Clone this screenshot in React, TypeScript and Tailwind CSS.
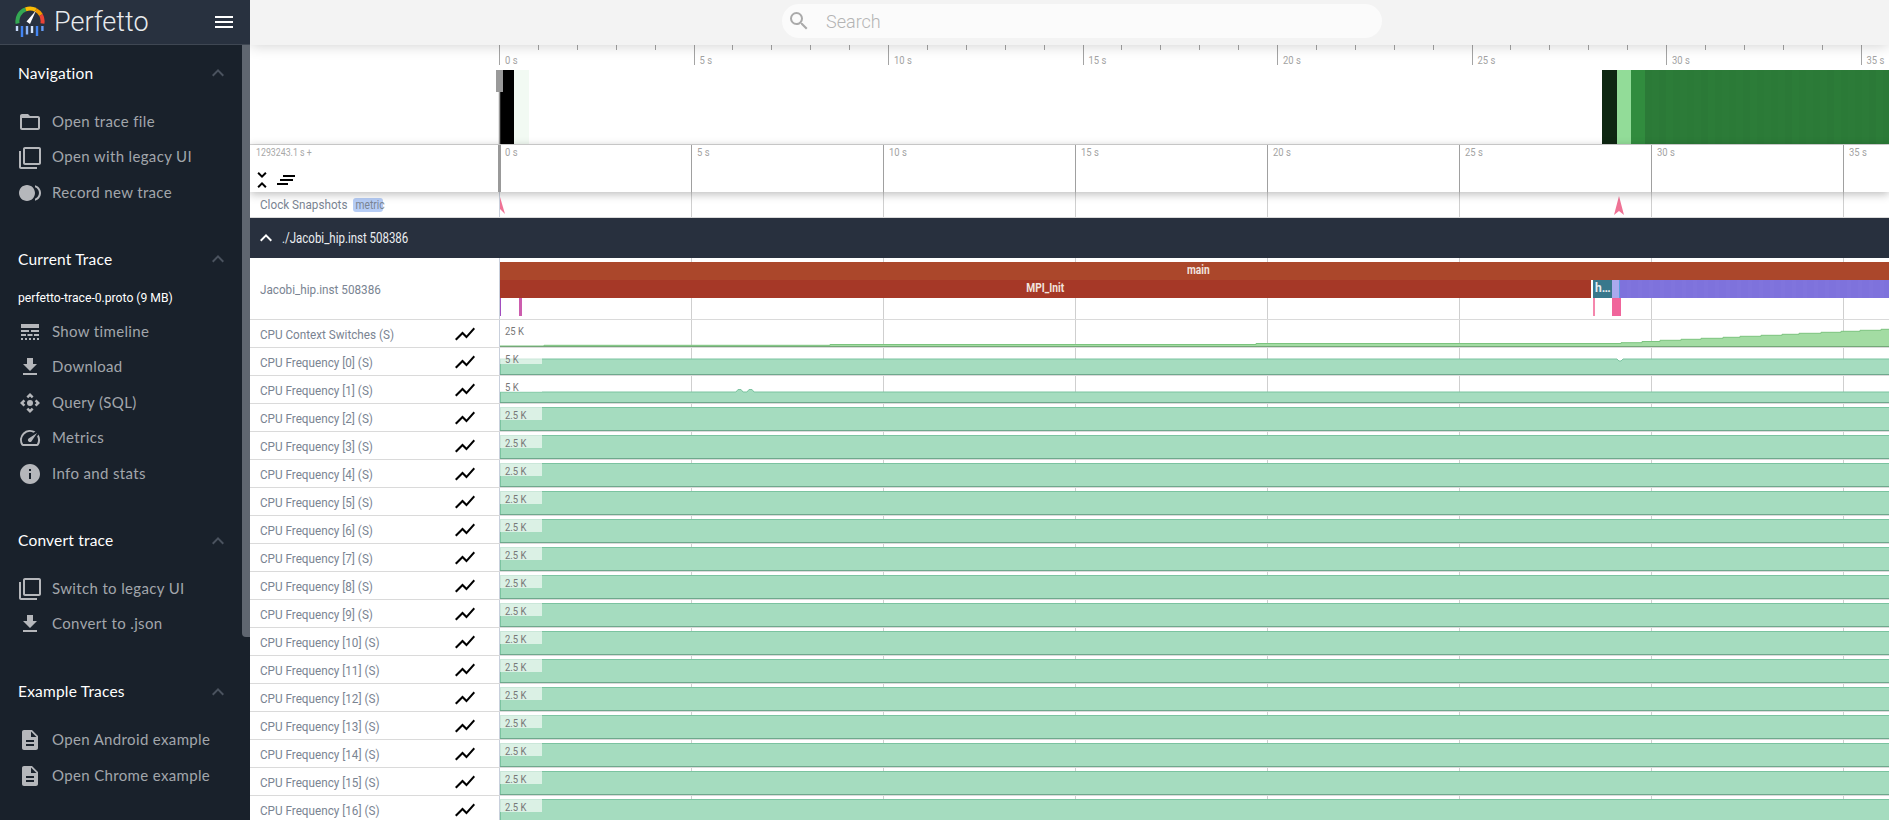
import type { ReactNode } from "react";

// material icon paths, same set the real sidebar uses
const ICONS: Record<string, string> = {
  folder:
    "M20 6h-8l-2-2H4c-1.1 0-1.99.9-1.99 2L2 18c0 1.1.9 2 2 2h16c1.1 0 2-.9 2-2V8c0-1.1-.9-2-2-2zm0 12H4V8h16v10z",
  copy: "M3 5H1v16c0 1.1.9 2 2 2h16v-2H3V5zm18-4H7c-1.1 0-2 .9-2 2v14c0 1.1.9 2 2 2h14c1.1 0 2-.9 2-2V3c0-1.1-.9-2-2-2zm0 16H7V3h14v14z",
  record:
    "M9 4c-4.42 0-8 3.58-8 8s3.58 8 8 8 8-3.58 8-8-3.58-8-8-8zm8 .26v2.09c2.33.82 4 3.04 4 5.65s-1.67 4.83-4 5.65v2.09c3.45-.89 6-4.01 6-7.74s-2.55-6.85-6-7.74z",
  timeline:
    "M3 16h5v-2H3v2zm6.5 0h5v-2h-5v2zm6.5 0h5v-2h-5v2zM3 20h2v-2H3v2zm4 0h2v-2H7v2zm4 0h2v-2h-2v2zm4 0h2v-2h-2v2zm4 0h2v-2h-2v2zM3 12h8v-2H3v2zm10 0h8v-2h-8v2zM3 4v4h18V4H3z",
  download: "M19 9h-4V3H9v6H5l7 7 7-7zM5 18v2h14v-2H5z",
  query:
    "M15.54 5.54L13.77 7.3 12 5.54 10.23 7.3 8.46 5.54 12 2zm2.92 10l-1.76-1.77L18.46 12l-1.76-1.77 1.76-1.77L22 12zm-10 2.92l1.77-1.76L12 18.46l1.77-1.76 1.77 1.76L12 22zm-2.92-10l1.76 1.77L5.54 12l1.76 1.77-1.76 1.77L2 12zM12 9a3 3 0 1 0 0 6 3 3 0 0 0 0-6z",
  speed:
    "M20.38 8.57l-1.23 1.85a8 8 0 0 1-.22 7.58H5.07A8 8 0 0 1 15.58 6.85l1.85-1.23A10 10 0 0 0 3.35 19a2 2 0 0 0 1.72 1h13.85a2 2 0 0 0 1.74-1 10 10 0 0 0-.27-10.44zm-9.79 6.84a2 2 0 0 0 2.83 0l5.66-8.49-8.49 5.66a2 2 0 0 0 0 2.83z",
  info: "M12 2C6.48 2 2 6.48 2 12s4.48 10 10 10 10-4.48 10-10S17.52 2 12 2zm1 15h-2v-6h2v6zm0-8h-2V7h2v2z",
  doc: "M14 2H6c-1.1 0-1.99.9-1.99 2L4 20c0 1.1.89 2 1.99 2H18c1.1 0 2-.9 2-2V8l-6-6zm2 16H8v-2h8v2zm0-4H8v-2h8v2zm-3-5V3.5L18.5 9H13z",
  chevron: "M12 8l-6 6 1.41 1.41L12 10.83l4.59 4.58L18 14z",
  chart: "M3.5 18.49l6-6.01 4 4L22 6.92l-1.41-1.41-7.09 7.97-4-4L2 16.99z",
  unfold:
    "M7.41 18.59L8.82 20 12 16.83 15.17 20l1.41-1.41L12 14l-4.59 4.59zm9.18-13.18L15.17 4 12 7.17 8.83 4 7.41 5.41 12 10l4.59-4.59z",
  search:
    "M15.5 14h-.79l-.28-.27A6.47 6.47 0 0 0 16 9.5 6.5 6.5 0 1 0 9.5 16c1.61 0 3.09-.59 4.23-1.57l.27.28v.79l5 4.99L20.49 19l-4.99-5zm-6 0C7.01 14 5 11.99 5 9.5S7.01 5 9.5 5 14 7.01 14 9.5 11.99 14 9.5 14z",
};

function Icon({ name, className }: { name: string; className: string }) {
  return (
    <svg viewBox="0 0 24 24" className={className} fill="currentColor">
      <path d={ICONS[name]} />
    </svg>
  );
}

function Logo() {
  return (
    <svg viewBox="0 0 30 32" className="w-[30px] h-8 shrink-0" fill="none">
      <g strokeWidth="4">
        <path d="M2.6 17.5A12.5 12.5 0 0 1 10.7 3.3" stroke="#34a853" />
        <path d="M10.7 3.3A12.5 12.5 0 0 1 20.8 3.9" stroke="#fbbc04" />
        <path d="M20.8 3.9A12.5 12.5 0 0 1 26 9" stroke="#f29900" />
        <path d="M26 9A12.5 12.5 0 0 1 27.4 17.5" stroke="#ea4335" />
      </g>
      <path d="M11.5 15.5L21 4.5 15 18z" fill="#fff" />
      <g strokeWidth="2.4">
        <path d="M2 20v5" stroke="#c6dafc" />
        <path d="M7 20v11" stroke="#4285f4" />
        <path d="M12 20v8.5" stroke="#8ab4f8" />
        <path d="M17 20v7" stroke="#d2e3fc" />
        <path d="M22 20v10" stroke="#4285f4" />
        <path d="M27.4 20v5" stroke="#669df6" />
      </g>
    </svg>
  );
}

interface SectionProps {
  title: string;
  subtitle?: string;
  items: [string, string][];
  className: string;
  listClass: string;
  headClass: string;
}

const SECTIONS: SectionProps[] = [
  {
    title: "Navigation",
    className: "mb-[20px]",
    listClass: "pt-[3.25px]",
    headClass: "mt-[2px]",
    items: [
      ["folder", "Open trace file"],
      ["copy", "Open with legacy UI"],
      ["record", "Record new trace"],
    ],
  },
  {
    title: "Current Trace",
    subtitle: "perfetto-trace-0.proto (9 MB)",
    className: "mb-[21.25px]",
    listClass: "pt-[7.25px]",
    headClass: "mt-[2px]",
    items: [
      ["timeline", "Show timeline"],
      ["download", "Download"],
      ["query", "Query (SQL)"],
      ["speed", "Metrics"],
      ["info", "Info and stats"],
    ],
  },
  {
    title: "Convert trace",
    className: "mb-[22.25px]",
    listClass: "pt-[2.25px]",
    headClass: "",
    items: [
      ["copy", "Switch to legacy UI"],
      ["download", "Convert to .json"],
    ],
  },
  {
    title: "Example Traces",
    className: "",
    listClass: "pt-[2.25px]",
    headClass: "mb-[2px]",
    items: [
      ["doc", "Open Android example"],
      ["doc", "Open Chrome example"],
    ],
  },
];

function Section({ title, subtitle, items, className, listClass, headClass }: SectionProps) {
  return (
    <section className={className}>
      <div className="h-14 flex items-center justify-between pl-[18px] pr-3">
        <h2 className={`text-[15.5px] text-white tracking-[0.2px] ${headClass}`}>{title}</h2>
        <Icon name="chevron" className="w-6 h-6 text-[#4b535f]" />
      </div>
      {subtitle && (
        <div className="h-5 pl-[18px] flex items-center font-[Roboto,sans-serif] text-[13.5px] text-white whitespace-nowrap">
          <span className="inline-block origin-left scale-x-[.9]">{subtitle}</span>
        </div>
      )}
      <ul className={listClass}>
        {items.map(([icon, label]) => (
          <li key={label} className="h-[35.5px] flex items-center pl-[18px] gap-[10px] text-[15px] tracking-[0.35px] text-[#a2a6ab]">
            <Icon name={icon} className="w-6 h-6 text-[#b5b7bb] shrink-0" />
            <span className="mb-[2px]">{label}</span>
          </li>
        ))}
      </ul>
    </section>
  );
}

function Sidebar() {
  return (
    <aside className="w-[250px] shrink-0 h-full bg-[#19212b] flex flex-col font-[Lato,sans-serif]">
      <header className="h-[45px] shrink-0 bg-[#28313f] border-b border-[#3f4753] flex items-center pl-[15px] pr-[17px]">
        <Logo />
        <span className="ml-[9px] text-[27px] font-light text-[#e8eaed] font-[Roboto,sans-serif]">Perfetto</span>
        <div className="ml-auto flex flex-col gap-[3px]">
          <div className="w-[18px] h-[2px] bg-white" />
          <div className="w-[18px] h-[2px] bg-white" />
          <div className="w-[18px] h-[2px] bg-white" />
        </div>
      </header>
      <div className="flex flex-1 min-h-0">
        <div className="w-[242px] shrink-0">
          {SECTIONS.map((s) => (
            <Section key={s.title} {...s} />
          ))}
        </div>
        <div className="w-2 h-[592px] bg-[#5f6670] rounded-bl-sm" />
      </div>
    </aside>
  );
}

function TopBar() {
  return (
    <div className="h-[45px] shrink-0 bg-[#f3f3f3] flex justify-center relative z-20 shadow-[0_0_14px_rgba(0,0,0,0.2)]">
      <div className="w-[600px] h-[34px] mt-1 ml-[25px] rounded-full bg-[#fbfbfb] flex items-center pl-[5px]">
        <Icon name="search" className="w-6 h-6 text-[#aaaaaa]" />
        <span className="ml-[15px] text-[18px] font-light text-[#b4b4b4]">Search</span>
      </div>
    </div>
  );
}

const SECONDS = [0, 5, 10, 15, 20, 25, 30, 35];

function SvgLabel({ x, y, children, fill = "#a3a3a3", size = 10.5 }: { x: number; y: number; children: ReactNode; fill?: string; size?: number }) {
  return (
    <text transform={`translate(${x} ${y}) scale(.9 1)`} fontSize={size} fill={fill}>
      {children}
    </text>
  );
}

function Overview() {
  const ticks = Array.from({ length: 38 }, (_, i) => i);
  const shades = ["#2b7a37", "#2c7b38", "#2b7937", "#2c7c38", "#2b7a37", "#2c7b38"];
  return (
    <div className="h-[100px] shrink-0 border-b border-[#d8d8d8] box-border">
      <svg className="block w-full h-[99px]" viewBox="0 0 1639 99" preserveAspectRatio="none">
        {ticks.map((i) => {
          const x = Math.round(249 + i * 38.9) + 0.5;
          return <line key={i} x1={x} x2={x} y1="0" y2={i % 5 === 0 ? 20 : 5} stroke="#a4a4a4" />;
        })}
        {SECONDS.map((s) => (
          <SvgLabel key={s} x={255 + s * 38.9} y={19}>{`${s} s`}</SvgLabel>
        ))}
        <rect x="250" y="25" width="14" height="74" fill="#000" />
        <rect x="264" y="25" width="15" height="74" fill="#f2faf3" />
        <rect x="1352" y="25" width="15" height="74" fill="#0e2712" />
        <rect x="1367" y="25" width="14" height="74" fill="#92dc98" />
        <rect x="1381" y="25" width="14" height="74" fill="#318c3e" />
        {Array.from({ length: 35 }, (_, i) => (
          <rect key={i} x={1395 + i * 7} y="25" width="7.5" height="74" fill={shades[i % shades.length]} />
        ))}
        <line x1="249.5" x2="249.5" y1="47" y2="99" stroke="#999" strokeWidth="1.5" />
        <rect x="246" y="25" width="7" height="22" fill="#9a9a9a" />
      </svg>
    </div>
  );
}

function TimeRuler() {
  return (
    <div className="h-[47px] shrink-0 flex relative z-10 bg-white shadow-[0_2px_9px_rgba(0,0,0,0.28)]">
      <div className="w-[248px] shrink-0 flex flex-col justify-between">
        <span className="pl-[6px] pt-[1px] text-[10px] text-[#a8a8a8] leading-[14px]">
          <span className="inline-block origin-left scale-x-[.88] whitespace-nowrap">1293243.1 s +</span>
        </span>
        <div className="flex items-center h-6">
          <Icon name="unfold" className="w-6 h-6 text-black" />
          <svg viewBox="0 0 18 10" className="w-[18px] h-[10px] ml-[3px] text-black" stroke="currentColor" strokeWidth="2">
            <path d="M6 1h12M3 5h13M0 9h11" />
          </svg>
        </div>
      </div>
      <svg className="flex-1 h-full border-l-[3px] border-[#999]" viewBox="0 0 1388 47" preserveAspectRatio="none">
        {SECONDS.slice(1).map((s) => (
          <line key={s} x1={s * 38.4 - 1.5} x2={s * 38.4 - 1.5} y1="0" y2="47" stroke="#a0a0a0" />
        ))}
        {SECONDS.map((s) => (
          <SvgLabel key={s} x={s * 38.4 + 4} y={11}>{`${s} s`}</SvgLabel>
        ))}
      </svg>
    </div>
  );
}

function TrackLabel({ label, graph = true }: { label: string; graph?: boolean }) {
  return (
    <div className="w-[249px] shrink-0 pl-[10px] pr-[22px] flex items-center justify-between text-[13px] text-[#7a8492] whitespace-nowrap">
      <span className="inline-block origin-left scale-x-[.9] mt-[2px]">{label}</span>
      {graph && <Icon name="chart" className="w-6 h-6 text-black" />}
    </div>
  );
}

// the 192px gridlines sit behind each track's drawing
const CHART_CLASS =
  "flex-1 min-w-0 border-l border-[#c9d0dc] bg-[linear-gradient(90deg,#cfcfcf_1px,transparent_1px)] bg-[length:192px_100%] bg-[position:191px_0] overflow-hidden";

function ContextSwitches() {
  const steps: [number, number][] = [
    [0, 26], [44, 25.3], [330, 24.5], [756, 23.5], [1121, 22.7], [1142, 21.5], [1160, 20.3], [1181, 19.3],
    [1201, 18.3], [1223, 17.3], [1240, 16.3], [1261, 15.3], [1282, 14.3], [1299, 13.3], [1321, 12.3],
    [1341, 11.3], [1360, 10.3], [1381, 9.3],
  ];
  let d = "";
  steps.forEach(([x, y], i) => {
    const next = i + 1 < steps.length ? steps[i + 1][0] : 1389;
    d += `${i ? "L" : "M"}${x} ${y}L${next} ${y}`;
  });
  return (
    <svg className="block w-full h-[27px]" viewBox="0 0 1389 27" preserveAspectRatio="none">
      <path d={`${d}L1389 27L0 27Z`} fill="#a3dca3" />
      <path d={d} fill="none" stroke="#7cc47f" />
      <line x1="0" x2="1389" y1="26.5" y2="26.5" stroke="#74a878" />
      <SvgLabel x={5} y={14.5} fill="#777">25 K</SvgLabel>
    </svg>
  );
}

function Frequency({ index }: { index: number }) {
  const top = index === 0 ? 11 : index === 1 ? 16 : 3.5;
  let line = `M0 ${top}L1389 ${top}`;
  if (index === 0) line = `M0 ${top}L1117 ${top}L1119 ${top + 2}L1121 ${top + 2}L1123 ${top}L1389 ${top}`;
  if (index === 1) line = `M0 ${top}L236 ${top}L238 ${top - 2.5}L241 ${top - 2.5}L243 ${top}L247 ${top}L249 ${top - 2.5}L252 ${top - 2.5}L254 ${top}L1389 ${top}`;
  return (
    <svg className="block w-full h-[27px]" viewBox="0 0 1389 27" preserveAspectRatio="none">
      <path d={`${line}L1389 27L0 27Z`} fill="#a5dcbf" />
      <path d={line} fill="none" stroke="#7bc3a0" />
      <line x1="0.5" x2="0.5" y1={top} y2="27" stroke="#7bc3a0" />
      <line x1="0" x2="1389" y1="26.5" y2="26.5" stroke="#6fa88d" />
      <rect x="0" y="3" width="42" height="13" fill="#fff" fillOpacity="0.6" />
      <SvgLabel x={5} y={14.5} fill="#777">{index < 2 ? "5 K" : "2.5 K"}</SvgLabel>
    </svg>
  );
}

function Track({ label, children }: { label: string; children: ReactNode }) {
  return (
    <div className="h-7 shrink-0 flex border-b border-[#dadada]">
      <TrackLabel label={label} />
      <div className={CHART_CLASS}>{children}</div>
    </div>
  );
}

function ProcessTrack() {
  return (
    <div className="h-[62px] shrink-0 flex border-b border-[#dadada]">
      <TrackLabel label="Jacobi_hip.inst 508386" graph={false} />
      <div className={`${CHART_CLASS} pt-1`}>
        <div className="w-[1396px] h-[18px] bg-[#ab472b] text-center text-[12px] font-bold leading-[17px] text-[#f1e3de]">
          <span className="inline-block scale-x-[.85]">main</span>
        </div>
        <div className="flex h-[18px] text-[12px] font-bold leading-[17px] text-[#f1e3de]">
          <div className="w-[1091px] shrink-0 bg-[#a63827] text-center">
            <span className="inline-block scale-x-[.85]">MPI_Init</span>
          </div>
          <div className="w-[2px] shrink-0 bg-white" />
          <div className="w-[19px] shrink-0 bg-[#38788c] pl-[2px] text-[#e6eef2]">h…</div>
          <div className="w-[7px] shrink-0 bg-[#a9a9ee]" />
          <div className="w-px shrink-0 bg-[#5b9be0]" />
          <div className="flex-1 bg-[repeating-linear-gradient(90deg,#7e72dc_0px,#7e72dc_7px,#8074dd_7px,#8074dd_11px)]" />
        </div>
        <div className="flex h-[18px]">
          <div className="w-px bg-[#a24dbf]" />
          <div className="w-[18px]" />
          <div className="w-[3px] bg-[#cc5dae]" />
          <div className="w-[1071px]" />
          <div className="w-[2px] bg-[#f587ad]" />
          <div className="w-[17px]" />
          <div className="w-[9px] bg-[#f0659b]" />
        </div>
      </div>
    </div>
  );
}

function ClockTrack() {
  return (
    <div className="h-[26px] shrink-0 flex border-b border-[#dadada]">
      <div className="w-[249px] shrink-0 pl-[10px] flex items-center text-[13px] text-[#7a8492] whitespace-nowrap">
        <span className="inline-block origin-left scale-x-[.9] w-[85px]">Clock Snapshots</span>
        <span className="ml-[8px] h-[14px] w-[30px] rounded-[3px] bg-[#b6cdf6] text-[12px] leading-[14px] text-center text-[#7a8492]">
          <span className="inline-block scale-x-[.85]">metric</span>
        </span>
      </div>
      <div className={CHART_CLASS}>
        <svg className="block w-full h-[25px]" viewBox="0 0 1389 25" preserveAspectRatio="none">
          <path d="M0 5L5 22L0 17z" fill="#ef7295" />
          <path d="M1119 4L1124 23L1119 19L1114 23z" fill="#ef7295" />
        </svg>
      </div>
    </div>
  );
}

function GroupHeader() {
  return (
    <div className="h-10 shrink-0 bg-[#28303e] flex items-center pl-1 text-white">
      <Icon name="chevron" className="w-6 h-6" />
      <span className="ml-1 text-[14px] text-[#eceef1] inline-block origin-left scale-x-[.82] whitespace-nowrap">./Jacobi_hip.inst 508386</span>
    </div>
  );
}

export default function App() {
  const cpus = Array.from({ length: 17 }, (_, i) => i);
  return (
    <div className="w-full h-screen flex overflow-hidden bg-white font-[Roboto,sans-serif]">
      <Sidebar />
      <main className="flex-1 min-w-0 flex flex-col overflow-hidden">
        <TopBar />
        <Overview />
        <TimeRuler />
        <ClockTrack />
        <GroupHeader />
        <ProcessTrack />
        <Track label="CPU Context Switches (S)">
          <ContextSwitches />
        </Track>
        {cpus.map((i) => (
          <Track key={i} label={`CPU Frequency [${i}] (S)`}>
            <Frequency index={i} />
          </Track>
        ))}
      </main>
    </div>
  );
}
